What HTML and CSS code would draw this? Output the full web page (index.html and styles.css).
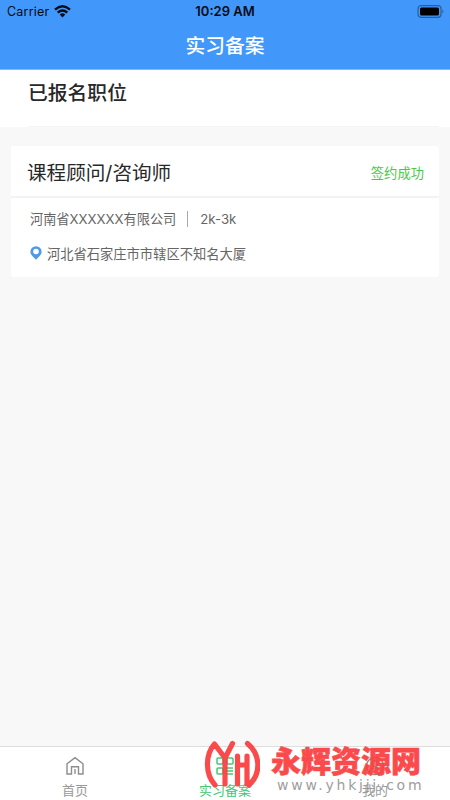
FILE: index.html
```html
<!DOCTYPE html>
<html lang="zh-CN">
<head>
<meta charset="utf-8">
<title>实习备案</title>
<link rel="stylesheet" href="styles.css">
</head>
<body>
<div class="app">
  <header class="header">
    <div class="status">
      <div class="carrier"><span>Carrier</span>
        <svg width="17" height="13" viewBox="0 0 17 13" fill="none" stroke="#050b14" stroke-width="2.4"><path d="M1 4.600Q8.500-2 16 4.600M3.700 7.600Q8.500 3.400 13.300 7.600"/><path d="M5.700 9.400Q8.500 7.200 11.300 9.400L8.500 12.400z" fill="#050b14" stroke="none"/></svg>
      </div>
      <div class="time">10:29 AM</div>
      <svg class="battery" width="28" height="13" viewBox="0 0 28 13"><rect x="2" y=".7" width="23" height="11.600" rx="3" fill="none" stroke="#286096" stroke-width="1.200"/><rect x="4" y="2.500" width="19" height="8" rx="1.500" fill="#000"/><path d="M26.300 4.500q2.200 2 0 4z" fill="#286096"/></svg>
    </div>
    <h1 class="title">实习备案</h1>
  </header>
  <section class="section"><h2 class="heading">已报名职位</h2></section>
  <main class="content">
    <article class="card">
      <div class="card-head"><h3 class="job">课程顾问/咨询师</h3><span class="state">签约成功</span></div>
      <div class="card-body">
        <div class="row"><span>河南省XXXXXX有限公司</span><i class="divider"></i><span>2k-3k</span></div>
        <div class="row place">
          <svg width="12" height="14" viewBox="0 0 12 14"><path fill="#4d9be6" fill-rule="evenodd" d="M6 .2A5.500 5.500 0 0 0 .4 5.700C.4 8.700 3.500 11.100 6 13.700c2.500-2.600 5.600-5 5.600-8A5.500 5.500 0 0 0 6 .2zm0 2.500a2.800 2.800 0 1 1 0 5.600 2.800 2.800 0 0 1 0-5.600z"/></svg>
          <span>河北省石家庄市市辖区不知名大厦</span>
        </div>
      </div>
    </article>
  </main>
  <nav class="tabs">
    <div class="tab">
      <svg width="20" height="20" viewBox="0 0 20 20" fill="none" stroke="#8d8d8d" stroke-width="1.400"><path d="M2 18V7.800L10 1.700l8 6.100V18h-4.500v-7.200h-7V18zM10 13v5"/></svg>
      <span>首页</span>
    </div>
    <div class="tab active">
      <svg width="20" height="20" viewBox="0 0 20 20" fill="none" stroke="#45c778" stroke-width="1.500"><rect x="2" y="2" width="6" height="6" rx="1"/><rect x="12" y="2" width="6" height="6" rx="1"/><rect x="2" y="12" width="6" height="6" rx="1"/><path d="M11 12h7M11 15h7M11 18h7"/></svg>
      <span>实习备案</span>
    </div>
    <div class="tab">
      <svg width="20" height="20" viewBox="0 0 20 20" fill="none" stroke="#8d8d8d" stroke-width="1.400"><circle cx="10" cy="10" r="8.500"/><circle cx="10" cy="7.500" r="3"/><path d="M4.500 16q0-4 5.500-4t5.500 4"/></svg>
      <span>我的</span>
    </div>
  </nav>
  <div class="watermark">
    <svg width="56" height="48" viewBox="204 740 56 48" fill="none" stroke="#fa4143" stroke-width="5.200" stroke-linecap="round" stroke-linejoin="round"><path d="M215 785C205 774 205 755 214.500 744L225 758L232.500 743.500M225 758V784M237.500 756V784M237.500 765H247M247 756V784M247.500 743.500C261 755 261 774 249 785"/></svg>
    <div class="brand"><strong>永辉资源网</strong><span>www.yhkjjj.com</span></div>
  </div>
</div>
</body>
</html>
```
FILE: styles.css
```css
* { box-sizing: border-box; }
body { margin: 0; font-family: "Noto Sans CJK SC", sans-serif; color: #282828; }
h1, h2, h3 { margin: 0; }
svg { display: block; flex: none; }
.app { position: relative; width: 450px; height: 800px; display: flex; flex-direction: column; background: #f8f8f8; overflow: hidden; }
.header { height: 70px; background: #4297fa; border-bottom: 1px solid #82b9f8; }
.status { display: grid; grid-template-columns: 1fr auto 1fr; align-items: center; height: 23px; padding: 0 6px 0 8px; font: 13px/23px Inter, sans-serif; color: #050b14; }
.carrier { display: flex; align-items: center; gap: 5px; margin-left: -1px; font-size: 12.500px; letter-spacing: .2px; }
.time { font-weight: 600; margin-left: -2px; }
.battery { justify-self: end; }
.title { height: 46px; font-size: 19.800px; line-height: 44px; font-weight: 500; text-align: center; color: #fff; }
.section { height: 57px; padding: 0 11px 0 28px; background: #fff; }
.heading { height: 57px; border-bottom: 1px solid #f5f5f5; font-size: 19.800px; line-height: 44px; font-weight: 500; }
.content { flex: 1; padding: 19px 11px; }
.card { height: 131px; background: #fff; border-radius: 3px; }
.card-head { display: flex; justify-content: space-between; height: 52px; padding: 0 15px 0 16px; border-bottom: 2px solid #f3f3f3; }
.job { font: 400 19.600px/54px Inter, "Noto Sans CJK SC", sans-serif; }
.state { font-size: 13.300px; line-height: 54px; color: #4ac947; }
.card-body { padding: 3px 19px; font-family: Inter, "Noto Sans CJK SC", sans-serif; font-size: 13.200px; color: #666; }
.row { display: flex; align-items: center; height: 35px; }
.divider { width: 1px; height: 16px; margin: 0 12px 0 11px; background: #aaa; }
.place { gap: 5px; font-size: 13.280px; }
.place svg { margin-top: -2px; }
.tabs { display: grid; grid-template-columns: repeat(3, 1fr); height: 54px; border-top: 1px solid #dedede; background: #fff; }
.tab { display: flex; flex-direction: column; align-items: center; padding-top: 9px; font-size: 13px; line-height: 19px; color: #999; }
.tab span { margin-top: 4px; }
.active { color: #45c778; }
.watermark { position: absolute; left: 204px; top: 740px; display: flex; gap: 11px; opacity: .95; }
.brand { display: flex; flex-direction: column; white-space: nowrap; }
.brand strong { font-size: 30px; line-height: 38px; font-weight: 900; color: #fa4143; -webkit-text-stroke: .6px #fa4143; }
.brand span { margin-left: 6px; font: 14px/14px "DejaVu Sans", sans-serif; letter-spacing: 2.750px; color: #999; }
```
